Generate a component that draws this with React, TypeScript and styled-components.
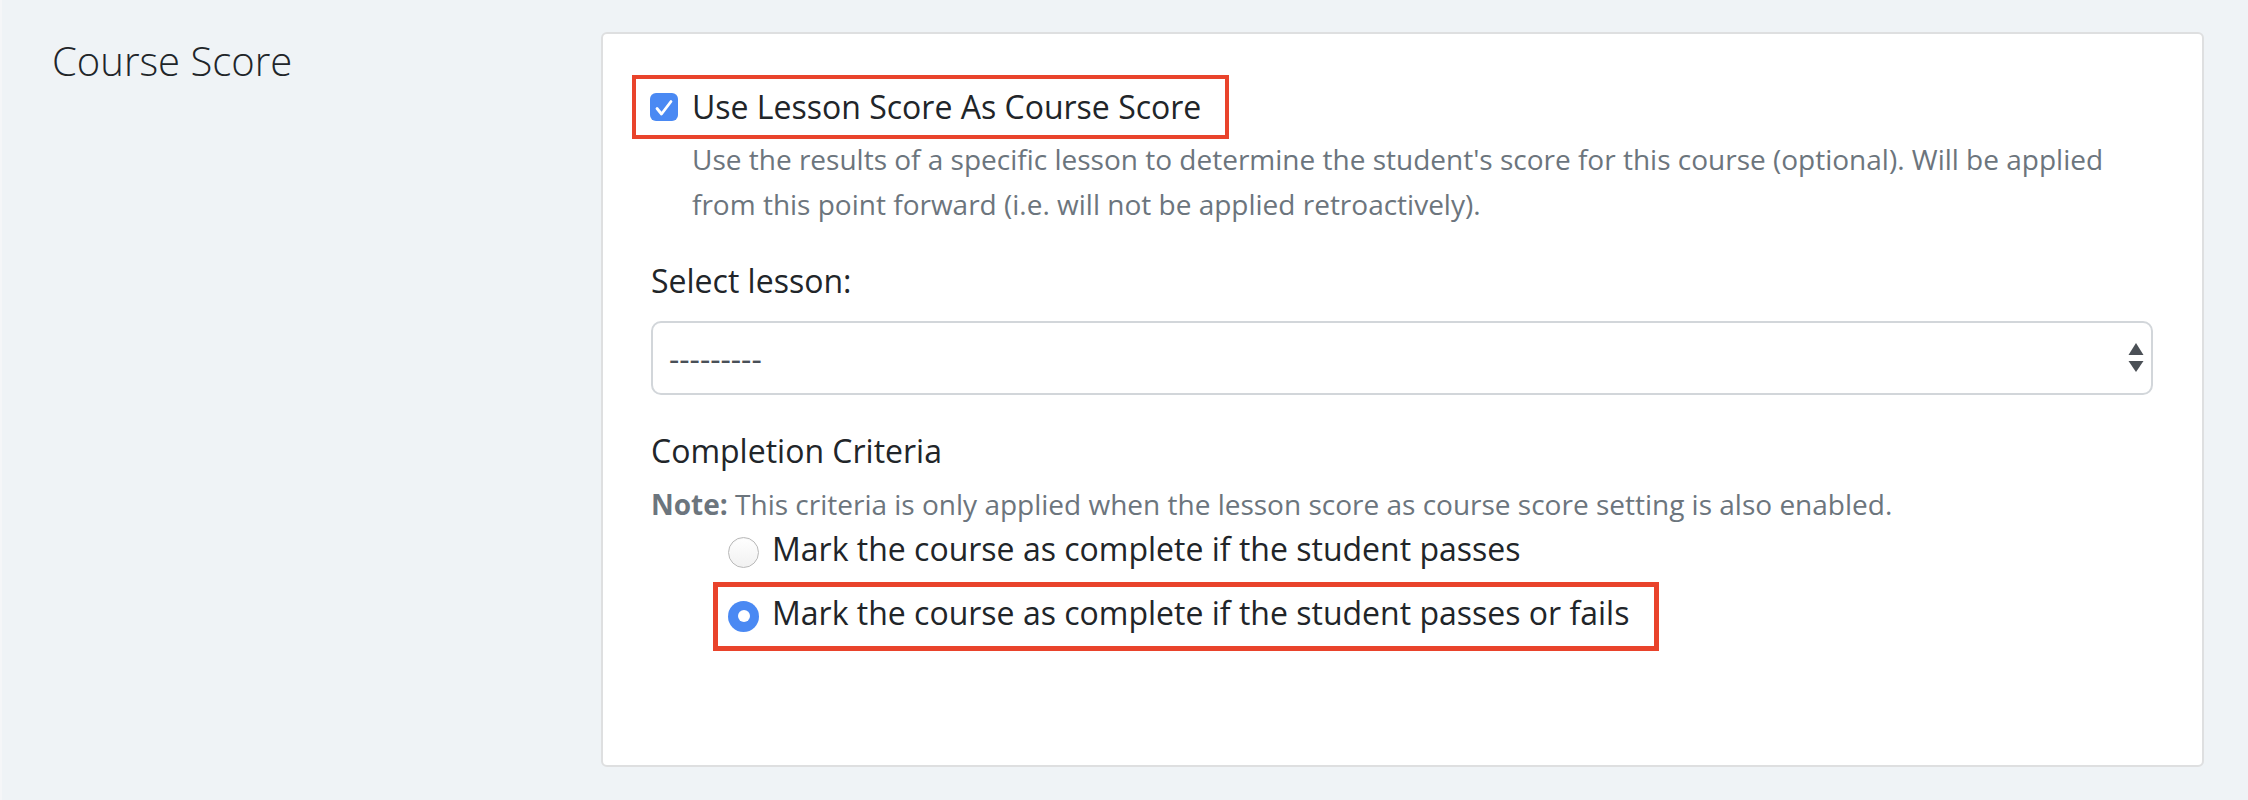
import React from "react";
import styled, { createGlobalStyle } from "styled-components";

const GlobalStyle = createGlobalStyle`
  html, body {
    margin: 0;
    padding: 0;
    background: #eff3f6;
  }
  body {
    font-family: "Open Sans", "Noto Sans", "Liberation Sans", sans-serif;
    color: #212529;
  }
  * { box-sizing: border-box; }
`;

const Page = styled.div`
  display: flex;
  align-items: flex-start;
  min-height: 800px;
  padding: 32px 44px 0 50px;
  border-left: 2px solid #f5f6f8;
  background: #eff3f6;
`;

const SideColumn = styled.div`
  width: 549px;
  flex: none;
`;

const SectionTitle = styled.h2`
  margin: 1px 0 0 0;
  font-size: 40px;
  font-weight: 300;
  line-height: normal;
  color: #212529;
`;

const Card = styled.div`
  width: 1603px;
  height: 735px;
  flex: none;
  background: #ffffff;
  border: 2px solid #dedfe0;
  border-radius: 6px;
  padding: 41px 49px 0 48px;
  display: flex;
  flex-direction: column;
  align-items: flex-start;
`;

const CheckHighlight = styled.label`
  display: inline-flex;
  align-items: center;
  gap: 14px;
  height: 64px;
  margin-left: -19px;
  padding: 0 24px 0 14px;
  border: 4px solid #e9432b;
  font-size: 32px;
  line-height: 48px;
  color: #212529;
`;

const CheckBox = styled.span`
  width: 28px;
  height: 28px;
  flex: none;
  border-radius: 6px;
  background: #4a89f3;
  display: flex;
  align-items: center;
  justify-content: center;
`;

const HelpText = styled.p`
  margin: -2px 0 0 0;
  padding-left: 41px;
  font-size: 28px;
  line-height: 45px;
  color: #6c757d;
`;

const FieldLabel = styled.div<{ $gap: number }>`
  margin-top: ${(p) => p.$gap}px;
  font-size: 32px;
  line-height: 48px;
  color: #212529;
`;

const SelectBox = styled.div`
  margin-top: 16px;
  width: 100%;
  height: 74px;
  border: 2px solid #d2d6da;
  border-radius: 10px;
  display: flex;
  align-items: center;
  justify-content: space-between;
  padding: 0 7px 0 16px;
  font-size: 32px;
  color: #495057;
`;

const Note = styled.p`
  margin: 8px 0 0 0;
  font-size: 28px;
  line-height: 42px;
  color: #6c757d;
  b {
    font-weight: 700;
  }
`;

const RadioRow = styled.label`
  display: flex;
  align-items: center;
  gap: 13px;
  height: 48px;
  margin-left: 77px;
  font-size: 32px;
  line-height: 48px;
  color: #212529;
`;

const RadioHighlight = styled.div`
  display: inline-flex;
  margin-top: 9px;
  margin-left: 62px;
  padding: 2px 25px 9px 10px;
  border: 5px solid #e9432b;
  ${RadioRow} {
    margin-left: 0;
  }
`;

const RadioCircle = styled.span<{ $checked?: boolean }>`
  width: 31px;
  height: 31px;
  flex: none;
  margin-top: 6px;
  border-radius: 50%;
  display: flex;
  align-items: center;
  justify-content: center;
  background: ${(p) =>
    p.$checked ? "#4a89f3" : "linear-gradient(#ffffff, #f1f1f1)"};
  border: ${(p) => (p.$checked ? "none" : "1.5px solid #b9b9b9")};
  box-shadow: ${(p) => (p.$checked ? "none" : "inset 0 1px 1px rgba(0,0,0,0.04)")};
`;

const RadioDot = styled.span`
  width: 12px;
  height: 12px;
  border-radius: 50%;
  background: #ffffff;
`;

const CheckIcon = () => (
  <svg width="28" height="28" viewBox="0 0 28 28" aria-hidden="true">
    <path
      d="M7 15.5 L11.5 21 L21 8.5"
      fill="none"
      stroke="#ffffff"
      strokeWidth="2.8"
      strokeLinecap="round"
      strokeLinejoin="round"
    />
  </svg>
);

const SelectArrows = () => (
  <svg width="16" height="30" viewBox="0 0 16 30" aria-hidden="true">
    <polygon points="8,0 15.5,12 0.5,12" fill="#4b5056" />
    <polygon points="0.5,18 15.5,18 8,29" fill="#4b5056" />
  </svg>
);

export default function App() {
  return (
    <>
      <GlobalStyle />
      <Page>
        <SideColumn>
          <SectionTitle>Course Score</SectionTitle>
        </SideColumn>
        <Card>
          <CheckHighlight>
            <CheckBox>
              <CheckIcon />
            </CheckBox>
            Use Lesson Score As Course Score
          </CheckHighlight>
          <HelpText>
            Use the results of a specific lesson to determine the student's score for this
            course (optional). Will be applied from this point forward (i.e. will not be
            applied retroactively).
          </HelpText>
          <FieldLabel $gap={30}>Select lesson:</FieldLabel>
          <SelectBox>
            <span>---------</span>
            <SelectArrows />
          </SelectBox>
          <FieldLabel $gap={32}>Completion Criteria</FieldLabel>
          <Note>
            <b>Note:</b> This criteria is only applied when the lesson score as course score
            setting is also enabled.
          </Note>
          <RadioRow>
            <RadioCircle />
            Mark the course as complete if the student passes
          </RadioRow>
          <RadioHighlight>
            <RadioRow>
              <RadioCircle $checked>
                <RadioDot />
              </RadioCircle>
              Mark the course as complete if the student passes or fails
            </RadioRow>
          </RadioHighlight>
        </Card>
      </Page>
    </>
  );
}
